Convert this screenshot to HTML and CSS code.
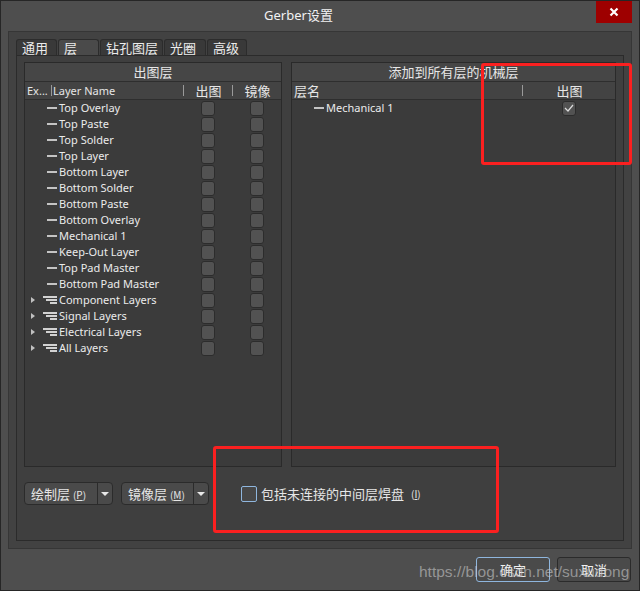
FILE: index.html
```html
<!DOCTYPE html>
<html lang="zh-CN">

<head>
  <meta charset="UTF-8">
  <meta name="viewport" content="width=device-width, initial-scale=1.0">
  <title>Gerber设置</title>
  <link rel="stylesheet" href="styles.css">
</head>

<body>
  <div class="window">
    <div class="titlebar">
      <span class="title">Gerber设置</span>
      <div class="close">
        <svg width="10" height="10" viewBox="0 0 10 10"><path d="M1.5 1.5 L8.5 8.5 M8.5 1.5 L1.5 8.5" stroke="#fff" stroke-width="2.2" /></svg>
      </div>
    </div>

    <div class="group">
      <div class="tabs">
        <div class="tab" style="width: 41px">通用</div>
        <div class="tab active" style="width: 41px">层</div>
        <div class="tab" style="width: 63px">钻孔图层</div>
        <div class="tab" style="width: 42px">光圈</div>
        <div class="tab" style="width: 40px">高级</div>
      </div>

      <div class="tab-panel">
        <div class="panels">
          <!-- 出图层 -->
          <div class="tree left">
            <div class="tree-title">出图层</div>
            <div class="col-head">
              <span class="hc">Ex...</span>
              <span class="hc sep">Layer Name</span>
              <span class="hc sep center cn">出图</span>
              <span class="hc sep center cn">镜像</span>
            </div>
            <div class="rows">
              <div class="row"><span></span><span class="name"><i class="dash"></i>Top Overlay</span><span class="cell"><i class="box"></i></span><span class="cell"><i class="box"></i></span></div>
              <div class="row"><span></span><span class="name"><i class="dash"></i>Top Paste</span><span class="cell"><i class="box"></i></span><span class="cell"><i class="box"></i></span></div>
              <div class="row"><span></span><span class="name"><i class="dash"></i>Top Solder</span><span class="cell"><i class="box"></i></span><span class="cell"><i class="box"></i></span></div>
              <div class="row"><span></span><span class="name"><i class="dash"></i>Top Layer</span><span class="cell"><i class="box"></i></span><span class="cell"><i class="box"></i></span></div>
              <div class="row"><span></span><span class="name"><i class="dash"></i>Bottom Layer</span><span class="cell"><i class="box"></i></span><span class="cell"><i class="box"></i></span></div>
              <div class="row"><span></span><span class="name"><i class="dash"></i>Bottom Solder</span><span class="cell"><i class="box"></i></span><span class="cell"><i class="box"></i></span></div>
              <div class="row"><span></span><span class="name"><i class="dash"></i>Bottom Paste</span><span class="cell"><i class="box"></i></span><span class="cell"><i class="box"></i></span></div>
              <div class="row"><span></span><span class="name"><i class="dash"></i>Bottom Overlay</span><span class="cell"><i class="box"></i></span><span class="cell"><i class="box"></i></span></div>
              <div class="row"><span></span><span class="name"><i class="dash"></i>Mechanical 1</span><span class="cell"><i class="box"></i></span><span class="cell"><i class="box"></i></span></div>
              <div class="row"><span></span><span class="name"><i class="dash"></i>Keep-Out Layer</span><span class="cell"><i class="box"></i></span><span class="cell"><i class="box"></i></span></div>
              <div class="row"><span></span><span class="name"><i class="dash"></i>Top Pad Master</span><span class="cell"><i class="box"></i></span><span class="cell"><i class="box"></i></span></div>
              <div class="row"><span></span><span class="name"><i class="dash"></i>Bottom Pad Master</span><span class="cell"><i class="box"></i></span><span class="cell"><i class="box"></i></span></div>
              <div class="row"><span class="exp"><i class="arrow"></i></span><span class="name"><i class="stack"></i>Component Layers</span><span class="cell"><i class="box"></i></span><span class="cell"><i class="box"></i></span></div>
              <div class="row"><span class="exp"><i class="arrow"></i></span><span class="name"><i class="stack"></i>Signal Layers</span><span class="cell"><i class="box"></i></span><span class="cell"><i class="box"></i></span></div>
              <div class="row"><span class="exp"><i class="arrow"></i></span><span class="name"><i class="stack"></i>Electrical Layers</span><span class="cell"><i class="box"></i></span><span class="cell"><i class="box"></i></span></div>
              <div class="row"><span class="exp"><i class="arrow"></i></span><span class="name"><i class="stack"></i>All Layers</span><span class="cell"><i class="box"></i></span><span class="cell"><i class="box"></i></span></div>
            </div>
          </div>

          <!-- 机械层 -->
          <div class="tree right">
            <div class="tree-title">添加到所有层的机械层</div>
            <div class="col-head">
              <span class="hc cn">层名</span>
              <span class="hc sep center cn">出图</span>
            </div>
            <div class="rows">
              <div class="row"><span></span><span class="name"><i class="dash"></i>Mechanical 1</span>
                <span class="cell"><i class="box">
                  <svg width="10" height="8" viewBox="0 0 10 8"><path d="M1 4 L4 7 L9 1" fill="none" stroke="#dcdcdc" stroke-width="1.2" /></svg>
                </i></span>
              </div>
            </div>
          </div>
        </div>

        <div class="bottom-row">
          <div class="split" style="width: 89px">
            <span class="split-main">绘制层 <small>(<u>P</u>)</small></span>
            <span class="split-drop"><i class="down"></i></span>
          </div>
          <div class="split" style="width: 88px">
            <span class="split-main">镜像层 <small>(<u>M</u>)</small></span>
            <span class="split-drop"><i class="down"></i></span>
          </div>
          <label class="check">
            <i class="check-box"></i>
            包括未连接的中间层焊盘 <small>(<u>I</u>)</small>
          </label>
        </div>
      </div>
    </div>

    <div class="dialog-buttons">
      <button class="btn default">确定</button>
      <button class="btn">取消</button>
    </div>

    <!-- 标注框 -->
    <div class="mark mark-top"></div>
    <div class="mark mark-bottom"></div>
    <div class="watermark">https://blog.csdn.net/suxudong</div>
  </div>
</body>

</html>
```

FILE: styles.css
```css
* {
  margin: 0;
  padding: 0;
  box-sizing: border-box;
}

body {
  background: #4e4e4e;
  font-family: "Noto Sans", "Noto Sans CJK SC", sans-serif;
  color: #e6e6e6;
}

.window {
  position: relative;
  width: 640px;
  height: 591px;
  background: #4e4e4e;
  border: 1px solid #262626;
  display: flex;
  flex-direction: column;
}

.titlebar {
  display: flex;
  height: 30px;
  flex-shrink: 0;
}

.title {
  flex: 1;
  text-align: center;
  line-height: 28px;
  font-size: 13px;
  color: #f2f2f2;
}

.close {
  width: 36px;
  height: 22px;
  margin-right: 7px;
  background: #9e0000;
  display: flex;
  align-items: center;
  justify-content: center;
}

.group {
  margin: 0 7px;
  height: 518px;
  background: #424242;
  border: 1px solid #363636;
  padding: 7px;
  display: flex;
  flex-direction: column;
}

.tabs {
  display: flex;
  gap: 1px;
  height: 16px;
  flex-shrink: 0;
}

.tab {
  height: 16px;
  background: #393939;
  border: 1px solid #2c2c2c;
  border-bottom: none;
  border-radius: 3px 3px 0 0;
  font-family: "Noto Sans CJK SC", sans-serif;
  font-size: 13px;
  line-height: 15px;
  padding-left: 5px;
  color: #ececec;
}

.tab.active {
  background: #4a4a4a;
}

.tab-panel {
  flex: 1;
  background: #3f3f3f;
  border: 1px solid #2b2b2b;
  padding: 6px 7px 0;
  display: flex;
  flex-direction: column;
}

.panels {
  display: flex;
  gap: 9px;
  height: 405px;
}

.tree {
  background: #3b3b3b;
  border: 1px solid #2a2a2a;
  display: flex;
  flex-direction: column;
}

.tree.left {
  width: 258px;
}

.tree.right {
  flex: 1;
}

.tree-title {
  height: 19px;
  background: #464646;
  border-bottom: 1px solid #2e2e2e;
  text-align: center;
  font-family: "Noto Sans CJK SC", sans-serif;
  font-size: 13px;
  line-height: 18px;
}

.col-head {
  height: 18px;
  background: #434343;
  border-bottom: 1px solid #2e2e2e;
  display: grid;
  font-size: 11px;
  line-height: 17px;
}

.left .col-head {
  grid-template-columns: 26px 132px 49px 49px;
}

.right .col-head {
  grid-template-columns: 230px 1fr;
}

.hc {
  padding-left: 2px;
  white-space: nowrap;
  overflow: hidden;
}

.hc.cn {
  font-family: "Noto Sans CJK SC", sans-serif;
  font-size: 13px;
}

.hc.sep {
  background: linear-gradient(#9a9a9a, #9a9a9a) left center / 1px 11px no-repeat;
}

.hc.center {
  text-align: center;
}

.row {
  display: grid;
  height: 16px;
  align-items: center;
  font-size: 11px;
}

.left .row {
  grid-template-columns: 18px 140px 49px 49px;
}

.right .row {
  grid-template-columns: 18px 212px 1fr;
}

.exp {
  padding-left: 6px;
  display: flex;
  align-items: center;
}

.arrow {
  width: 0;
  height: 0;
  border-left: 4px solid #c0c0c0;
  border-top: 3px solid transparent;
  border-bottom: 3px solid transparent;
}

.name {
  display: flex;
  align-items: center;
  gap: 2px;
  margin-top: -2px;
  white-space: nowrap;
  color: #ebebeb;
}

.dash {
  width: 14px;
  height: 2px;
  margin-top: 1px;
  background: linear-gradient(#c4c4c4, #c4c4c4) right center / 10px 2px no-repeat;
}

.stack {
  width: 14px;
  height: 8px;
  margin-top: 1px;
  background:
    linear-gradient(#d2d2d2, #d2d2d2) right 0 top 0 / 14px 2px no-repeat,
    linear-gradient(#d2d2d2, #d2d2d2) right 0 top 3px / 11px 2px no-repeat,
    linear-gradient(#d2d2d2, #d2d2d2) right 0 top 6px / 7px 2px no-repeat;
}

.cell {
  display: flex;
  justify-content: center;
}

.box {
  width: 14px;
  height: 15px;
  background: #525252;
  border: 1px solid #2c2c2c;
  border-radius: 3px;
  display: flex;
  align-items: center;
  justify-content: center;
}

.bottom-row {
  margin-top: 15px;
  height: 23px;
  display: flex;
  align-items: center;
  gap: 8px;
}

.split {
  height: 23px;
  display: flex;
  background: #4a4a4a;
  border: 1px solid #2b2b2b;
  border-radius: 4px;
  font-family: "Noto Sans CJK SC", sans-serif;
  font-size: 13px;
}

.split-main {
  flex: 1;
  padding-left: 6px;
  line-height: 21px;
  white-space: nowrap;
}

small {
  font-size: 10px;
}

.split-drop {
  width: 15px;
  border-left: 1px solid #2b2b2b;
  display: flex;
  align-items: center;
  justify-content: center;
}

.down {
  width: 0;
  height: 0;
  border-top: 4px solid #e8e8e8;
  border-left: 4px solid transparent;
  border-right: 4px solid transparent;
}

.check {
  margin-left: 24px;
  display: flex;
  align-items: center;
  gap: 4px;
  font-family: "Noto Sans CJK SC", sans-serif;
  font-size: 13px;
  white-space: nowrap;
}

.check small {
  margin-left: 3px;
}

.check-box {
  width: 16px;
  height: 16px;
  background: #474747;
  border: 1px solid #8fb6de;
  border-radius: 2px;
}

.dialog-buttons {
  margin-top: 8px;
  display: flex;
  justify-content: flex-end;
  gap: 7px;
  padding-right: 8px;
}

.btn {
  width: 74px;
  height: 25px;
  background: #4a4a4a;
  border: 1px solid #2b2b2b;
  border-radius: 3px;
  color: #f0f0f0;
  font-family: "Noto Sans CJK SC", sans-serif;
  font-size: 13px;
}

.btn.default {
  border-color: #8fb6de;
}

.mark {
  position: absolute;
  border: 3px solid #fb2020;
  border-radius: 3px;
}

.mark-top {
  left: 480px;
  top: 62px;
  width: 151px;
  height: 102px;
}

.mark-bottom {
  left: 212px;
  top: 445px;
  width: 286px;
  height: 87px;
}

.watermark {
  position: absolute;
  left: 418px;
  top: 561px;
  font-family: "Liberation Sans", Arial, sans-serif;
  font-size: 15.5px;
  line-height: 20px;
  color: rgba(200, 200, 200, 0.6);
  white-space: nowrap;
}
```
